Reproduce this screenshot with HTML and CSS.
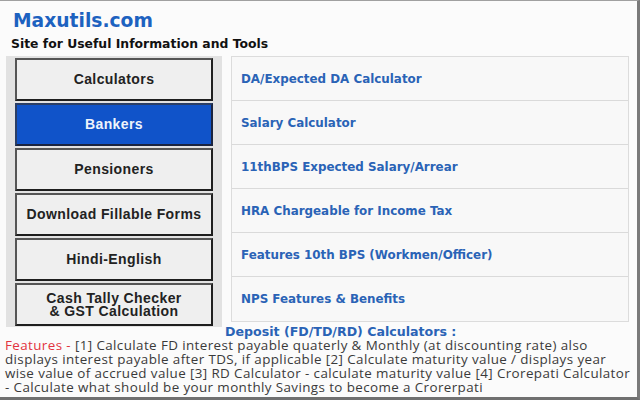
FILE: index.html
```html
<!DOCTYPE html>
<html>
<head>
<meta charset="utf-8">
<link rel="stylesheet" href="styles.css">
</head>
<body>
<div class="page">
  <header class="head">
    <h1 class="title">Maxutils.com</h1>
    <p class="subtitle">Site for Useful Information and Tools</p>
  </header>
  <div class="main">
    <nav class="menu">
      <div class="btn">Calculators</div>
      <div class="btn active">Bankers</div>
      <div class="btn">Pensioners</div>
      <div class="btn">Download Fillable Forms</div>
      <div class="btn">Hindi-English</div>
      <div class="btn two">Cash Tally Checker<br>&amp; GST Calculation</div>
    </nav>
    <ul class="links">
      <li>DA/Expected DA Calculator</li>
      <li>Salary Calculator</li>
      <li>11thBPS Expected Salary/Arrear</li>
      <li>HRA Chargeable for Income Tax</li>
      <li>Features 10th BPS (Workmen/Officer)</li>
      <li>NPS Features &amp; Benefits</li>
    </ul>
  </div>
  <h2 class="deposit">Deposit (FD/TD/RD) Calculators :</h2>
  <p class="desc"><span class="red">Features - </span>[1] Calculate FD interest payable quaterly &amp; Monthly (at discounting rate) also<br>displays interest payable after TDS, if applicable [2] Calculate maturity value / displays year<br>wise value of accrued value [3] RD Calculator - calculate maturity value [4] Crorepati Calculator<br>- Calculate what should be your monthly Savings to become a Crorerpati</p>
</div>
</body>
</html>
```
FILE: styles.css
```css
* { box-sizing: border-box; }
html, body { margin: 0; padding: 0; }
body { background: #fafafa; }
.page {
  width: 640px;
  height: 400px;
  overflow: hidden;
  background: #fbfbfb;
  border-top: 1px solid #a0a0a0;
  border-right: 3px solid #7a7a7a;
  border-bottom: 3px solid #707070;
  font-family: "DejaVu Sans", Verdana, sans-serif;
}
.head { padding: 9px 0 0 13px; height: 55px; }
.title {
  margin: 0;
  font-size: 18.7px;
  line-height: 22px;
  font-weight: bold;
  color: #1d62c0;
}
.subtitle {
  margin: 4px 0 0 -2px;
  font-size: 12.4px;
  line-height: 15px;
  font-weight: bold;
  color: #111;
}
.main { display: flex; align-items: flex-start; }
.menu {
  margin-left: 6px;
  width: 216px;
  background: #e2e2e2;
  padding: 2px 9px 1px 9px;
  display: flex;
  flex-direction: column;
  gap: 2px;
}
.btn {
  height: 43px;
  border: 2px solid;
  border-color: #555 #1e1e1e #1e1e1e #555;
  background: #efefef;
  display: flex;
  align-items: center;
  justify-content: center;
  text-align: center;
  font-family: "Liberation Sans", Arial, sans-serif;
  font-weight: bold;
  font-size: 14px;
  letter-spacing: 0.4px;
  line-height: 12.5px;
  color: #222;
}
.btn.active { background: #1053c9; color: #eef3fb; border-color: #2a3e66 #1a2440 #1a2440 #2a3e66; }
.links {
  list-style: none;
  margin: 0 0 0 9px;
  padding: 0;
  width: 398px;
  border: 1px solid #dcdcdc;
  background: #f8f8f8;
}
.links li {
  height: 44px;
  display: flex;
  align-items: center;
  padding-left: 9px;
  padding-top: 0;
  border-bottom: 1px solid #dadada;
  font-size: 11.9px;
  font-weight: bold;
  color: #2a63b6;
}
.links li:last-child { border-bottom: none; }
.deposit {
  margin: -2px 0 0 225px;
  font-size: 12.6px;
  line-height: 13px;
  font-weight: bold;
  color: #2a63b6;
}
.desc {
  margin: 0 0 0 5px;
  width: 632px;
  white-space: nowrap;
  font-family: "Open Sans", "Noto Sans", sans-serif;
  font-size: 13.4px;
  letter-spacing: 0.4px;
  line-height: 14px;
  color: #3a3a3a;
}
.red { color: #e23340; }
```
